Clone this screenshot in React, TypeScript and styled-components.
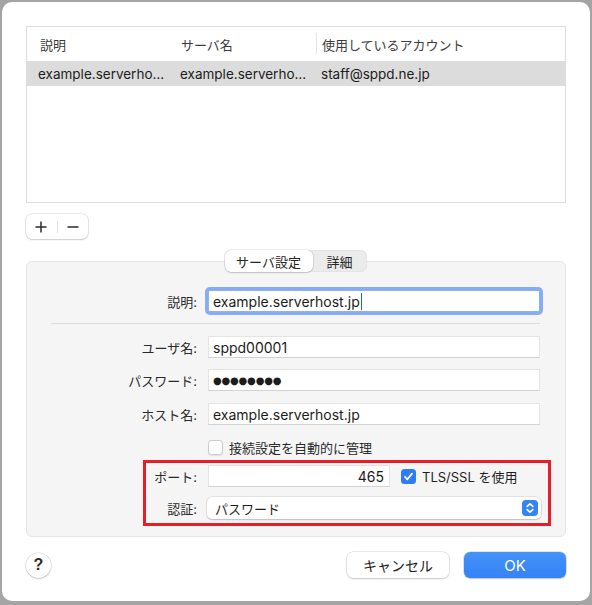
import React from "react";
import styled, { createGlobalStyle } from "styled-components";

const Global = createGlobalStyle`
  html, body { margin: 0; padding: 0; background: #a5a5a5; }
  body {
    font-family: Inter, "Noto Sans CJK JP", sans-serif;
    color: #222;
    -webkit-font-smoothing: antialiased;
  }
  #root { padding: 2px 0 0 2px; }
`;

const Window = styled.div`
  width: 588px;
  height: 599px;
  box-sizing: border-box;
  background: #fff;
  border-radius: 10px;
  padding: 24px 24px 23px 24px;
  display: flex;
  flex-direction: column;
`;

const Table = styled.div`
  height: 177px;
  box-sizing: border-box;
  border: 1px solid #dddddd;
  background: #fff;
  display: flex;
  flex-direction: column;
`;

const TableRow = styled.div<{ $header?: boolean; $selected?: boolean }>`
  display: grid;
  grid-template-columns: 148px 141px 1fr;
  height: ${(p) => (p.$header ? 34 : 25)}px;
  align-items: center;
  background: ${(p) => (p.$selected ? "#dcdcdc" : "transparent")};
`;

const HeaderCell = styled.div<{ $first?: boolean }>`
  position: relative;
  height: 100%;
  display: flex;
  align-items: center;
  padding-left: ${(p) => (p.$first ? 13 : 6)}px;
  font-size: 13px;
  color: #3c3c3c;
  & + &::before {
    content: "";
    position: absolute;
    left: 0;
    top: 6px;
    bottom: 7px;
    width: 1px;
    background: #e3e3e3;
  }
`;

const Cell = styled.div<{ $first?: boolean }>`
  padding-left: ${(p) => (p.$first ? 11 : 5)}px;
  font-size: 13.5px;
  color: #1d1d1d;
  white-space: nowrap;
  overflow: hidden;
`;

const PlusMinus = styled.div`
  margin-top: 11px;
  align-self: flex-start;
  display: flex;
  align-items: center;
  height: 25px;
  width: 62px;
  box-sizing: border-box;
  background: #fff;
  border-radius: 6px;
  box-shadow: 0 0 0 0.5px rgba(0, 0, 0, 0.16), 0 1px 2px rgba(0, 0, 0, 0.14);
`;

const PMButton = styled.div`
  flex: 1;
  height: 100%;
  display: flex;
  align-items: center;
  justify-content: center;
  & + & {
    border-left: 1px solid #e0e0e0;
    height: 12px;
  }
`;

const Group = styled.div`
  margin-top: 22px;
  border: 1px solid #e6e6e6;
  border-radius: 6px;
  background: #f5f5f5;
  padding: 0 25px 17px 24px;
  display: flex;
  flex-direction: column;
`;

const Tabs = styled.div`
  margin-top: -12px;
  align-self: center;
  display: flex;
  height: 22px;
  border-radius: 6px;
  background: #ebebeb;
  box-shadow: inset 0 0 0 0.5px rgba(0, 0, 0, 0.06);
`;

const Tab = styled.div<{ $active?: boolean; $w: number }>`
  width: ${(p) => p.$w}px;
  height: 22px;
  display: flex;
  align-items: center;
  justify-content: center;
  font-size: 13px;
  color: #262626;
  border-radius: 6px;
  background: ${(p) => (p.$active ? "#fff" : "transparent")};
  box-shadow: ${(p) =>
    p.$active ? "0 0 0 0.5px rgba(0,0,0,.16), 0 1px 1.5px rgba(0,0,0,.14)" : "none"};
`;

const Row = styled.div<{ $mt: number }>`
  display: flex;
  align-items: center;
  height: 22px;
  margin-top: ${(p) => p.$mt}px;
`;

const Label = styled.div`
  flex: 0 0 146px;
  margin-right: 11px;
  text-align: right;
  font-size: 13px;
  color: #2a2a2a;
`;

const Field = styled.div<{ $focused?: boolean; $w?: number; $right?: boolean }>`
  ${(p) => (p.$w ? `flex: 0 0 ${p.$w}px;` : "flex: 1;")}
  height: 22px;
  box-sizing: border-box;
  display: flex;
  align-items: center;
  justify-content: ${(p) => (p.$right ? "flex-end" : "flex-start")};
  padding: 0 ${(p) => (p.$right ? 5 : 4)}px;
  background: #fff;
  border: 1px solid #e4e4e4;
  border-bottom-color: #d2d2d2;
  font-size: 14px;
  color: #1c1c1c;
  white-space: nowrap;
  ${(p) =>
    p.$focused
      ? `box-shadow: 0 0 0 3px #86acf3; border-radius: 2px; border-color: #8fb1f0;`
      : ""}
`;

const Caret = styled.span`
  display: inline-block;
  width: 1.5px;
  height: 17px;
  margin-left: 1px;
  background: #1f5fe6;
`;

const Dots = styled.span`
  font-family: "DejaVu Sans", sans-serif;
  font-size: 10px;
  letter-spacing: -0.2px;
  color: #1c1c1c;
`;

const Separator = styled.div`
  margin-top: 11px;
  height: 1px;
  background: #dcdcdc;
`;

const CheckRow = styled.div<{ $mt: number; $indent?: number }>`
  display: flex;
  align-items: center;
  margin-top: ${(p) => p.$mt}px;
  margin-left: ${(p) => p.$indent ?? 0}px;
  height: 14px;
  font-size: 13px;
  color: #2a2a2a;
  gap: 6px;
`;

const Box = styled.span<{ $checked?: boolean }>`
  width: 15px;
  height: 15px;
  box-sizing: border-box;
  border-radius: 3.5px;
  display: inline-flex;
  align-items: center;
  justify-content: center;
  background: ${(p) => (p.$checked ? "#2f7df6" : "#fff")};
  border: ${(p) => (p.$checked ? "none" : "1px solid #cbcbcb")};
  box-shadow: ${(p) => (p.$checked ? "none" : "0 0.5px 1px rgba(0,0,0,.08)")};
`;

const Highlight = styled.div`
  position: relative;
  &::before {
    content: "";
    position: absolute;
    top: 6px;
    left: 92px;
    right: -11px;
    bottom: -7px;
    border: 3px solid #e61e28;
    pointer-events: none;
  }
`;

const InlineCheck = styled.div`
  display: flex;
  align-items: center;
  margin-left: 11px;
  gap: 6px;
  font-size: 13px;
  color: #1f1f1f;
`;

const Popup = styled.div`
  flex: 1;
  margin-left: -1px;
  margin-right: -1px;
  height: 22px;
  box-sizing: border-box;
  display: flex;
  align-items: center;
  justify-content: space-between;
  padding: 0 3px 0 8px;
  background: #fff;
  border-radius: 5px;
  box-shadow: 0 0 0 0.5px rgba(0, 0, 0, 0.14), 0 1px 1.5px rgba(0, 0, 0, 0.16);
  font-size: 13px;
  color: #1f1f1f;
`;

const Stepper = styled.span`
  width: 16px;
  height: 16px;
  border-radius: 4px;
  background: #3584f5;
  display: inline-flex;
  align-items: center;
  justify-content: center;
`;

const Footer = styled.div`
  margin-top: 15px;
  display: flex;
  align-items: center;
`;

const Help = styled.div`
  width: 25px;
  height: 25px;
  border-radius: 50%;
  background: #fff;
  box-shadow: 0 0 0 0.5px rgba(0, 0, 0, 0.16), 0 1px 2px rgba(0, 0, 0, 0.16);
  display: flex;
  align-items: center;
  justify-content: center;
  font-family: "Liberation Sans", sans-serif;
  font-size: 16px;
  font-weight: 600;
  color: #2a2a2a;
`;

const Spacer = styled.div`
  flex: 1;
`;

const Button = styled.div<{ $primary?: boolean }>`
  width: 102px;
  height: 26px;
  margin-left: 15px;
  border-radius: 6px;
  display: flex;
  align-items: center;
  justify-content: center;
  font-size: ${(p) => (p.$primary ? 15 : 14)}px;
  color: ${(p) => (p.$primary ? "#fff" : "#222")};
  background: ${(p) => (p.$primary ? "linear-gradient(#4592f8, #3482f6)" : "#fff")};
  box-shadow: ${(p) =>
    p.$primary
      ? "0 0 0 0.5px rgba(0,60,160,.25), 0 1px 1.5px rgba(0,0,0,.14)"
      : "0 0 0 0.5px rgba(0,0,0,.16), 0 1px 2px rgba(0,0,0,.16)"};
`;

const PlusIcon = () => (
  <svg width="14" height="14" viewBox="0 0 14 14">
    <path d="M7 1.5 V12.5 M1.5 7 H12.5" stroke="#2b2b2b" strokeWidth="1.5" fill="none" />
  </svg>
);

const MinusIcon = () => (
  <svg width="14" height="14" viewBox="0 0 14 14">
    <path d="M1.5 7 H12.5" stroke="#2b2b2b" strokeWidth="1.5" fill="none" />
  </svg>
);

const CheckMark = () => (
  <svg width="11" height="11" viewBox="0 0 11 11">
    <path
      d="M2 5.8 L4.4 8.3 L9 2.6"
      stroke="#fff"
      strokeWidth="1.8"
      fill="none"
      strokeLinecap="round"
      strokeLinejoin="round"
    />
  </svg>
);

const Chevrons = () => (
  <svg width="16" height="16" viewBox="0 0 16 16">
    <path
      d="M5.2 6.4 L8 3.8 L10.8 6.4 M5.2 9.6 L8 12.2 L10.8 9.6"
      stroke="#fff"
      strokeWidth="1.6"
      fill="none"
      strokeLinecap="round"
      strokeLinejoin="round"
    />
  </svg>
);

export default function App() {
  return (
    <>
      <Global />
      <Window>
        <Table>
          <TableRow $header>
            <HeaderCell $first>説明</HeaderCell>
            <HeaderCell>サーバ名</HeaderCell>
            <HeaderCell>使用しているアカウント</HeaderCell>
          </TableRow>
          <TableRow $selected>
            <Cell $first>example.serverho…</Cell>
            <Cell>example.serverho…</Cell>
            <Cell>staff@sppd.ne.jp</Cell>
          </TableRow>
        </Table>

        <PlusMinus>
          <PMButton>
            <PlusIcon />
          </PMButton>
          <PMButton>
            <MinusIcon />
          </PMButton>
        </PlusMinus>

        <Group>
          <Tabs>
            <Tab $active $w={88}>
              サーバ設定
            </Tab>
            <Tab $w={54}>詳細</Tab>
          </Tabs>

          <Row $mt={18}>
            <Label>説明:</Label>
            <Field $focused>
              example.serverhost.jp
              <Caret />
            </Field>
          </Row>

          <Separator />

          <Row $mt={12}>
            <Label>ユーザ名:</Label>
            <Field>sppd00001</Field>
          </Row>
          <Row $mt={11}>
            <Label>パスワード:</Label>
            <Field>
              <Dots>●●●●●●●●</Dots>
            </Field>
          </Row>
          <Row $mt={12}>
            <Label>ホスト名:</Label>
            <Field>example.serverhost.jp</Field>
          </Row>

          <CheckRow $mt={15} $indent={157}>
            <Box />
            接続設定を自動的に管理
          </CheckRow>

          <Highlight>
            <Row $mt={11}>
              <Label>ポート:</Label>
              <Field $w={182} $right>
                465
              </Field>
              <InlineCheck>
                <Box $checked>
                  <CheckMark />
                </Box>
                TLS/SSL を使用
              </InlineCheck>
            </Row>
            <Row $mt={10}>
              <Label>認証:</Label>
              <Popup>
                パスワード
                <Stepper>
                  <Chevrons />
                </Stepper>
              </Popup>
            </Row>
          </Highlight>
        </Group>

        <Footer>
          <Help>?</Help>
          <Spacer />
          <Button>キャンセル</Button>
          <Button $primary>OK</Button>
        </Footer>
      </Window>
    </>
  );
}
